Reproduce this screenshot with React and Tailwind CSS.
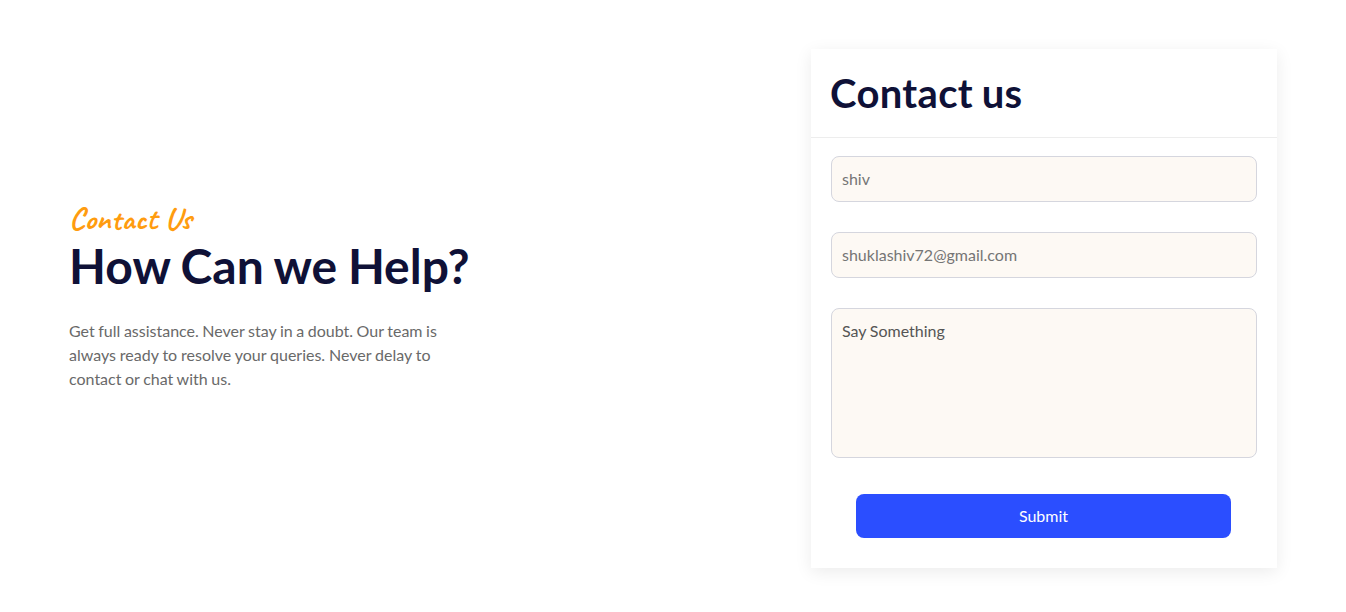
const fieldClass =
  "block w-full rounded-lg border border-[#d5d6de] bg-[#fdf9f4] px-2.5 text-base text-[#555] outline-none placeholder:text-[#757575]";

function Intro() {
  return (
    <section className="w-[410px] pt-[150px]">
      <p className="flex h-[40px] items-center font-['Caveat','Lato',cursive] text-[32px] leading-[40px] font-bold whitespace-nowrap text-[#ff9c0f]">
        Contact Us
      </p>
      <h1 className="h-[56px] text-[48px] leading-[54px] font-bold [word-spacing:-1px] whitespace-nowrap text-[#0f1137]">
        How Can we Help?
      </h1>
      <p className="mt-[24px] w-[390px] text-base leading-6 text-[#696969]">
        <span className="[word-spacing:-0.55px]">Get full assistance. Never stay in a doubt. Our team is</span>
        <br />
        <span className="[word-spacing:-0.25px]">always ready to resolve your queries. Never delay to</span>
        <br />
        <span className="[word-spacing:-0.5px]">contact or chat with us.</span>
      </p>
    </section>
  );
}

function ContactCard() {
  return (
    <form
      className="h-[519px] w-[466px] bg-white shadow-[0_4px_16px_rgba(0,0,0,0.08)]"
      onSubmit={(event) => event.preventDefault()}
    >
      <header className="flex h-[89px] items-center border-b border-[#ededed] px-5">
        <h2 className="-ml-px text-[40px] leading-[48px] font-bold tracking-[0.35px] [word-spacing:-1.5px] text-[#0f1137]">Contact us</h2>
      </header>
      <div className="flex flex-col gap-[30px] px-5 pt-[18px]">
        <input className={`${fieldClass} h-[46px] pb-0.5`} placeholder="shiv" aria-label="Name" />
        <input className={`${fieldClass} h-[46px] pb-0.5`} placeholder="shuklashiv72@gmail.com" aria-label="Email" />
        <textarea
          className={`${fieldClass} h-[150px] resize-none py-2.5 leading-6 [word-spacing:-0.5px]`}
          defaultValue="Say Something"
          aria-label="Message"
        />
      </div>
      <button className="mt-9 ml-[45px] block h-11 w-[375px] rounded-lg bg-[#2b4eff] text-base text-white">
        Submit
      </button>
    </form>
  );
}

export default function App() {
  return (
    <main className="flex h-[612px] items-start justify-between overflow-hidden bg-white pt-[49px] pr-[69px] pl-[69px] font-['Lato',sans-serif]">
      <Intro />
      <ContactCard />
    </main>
  );
}
